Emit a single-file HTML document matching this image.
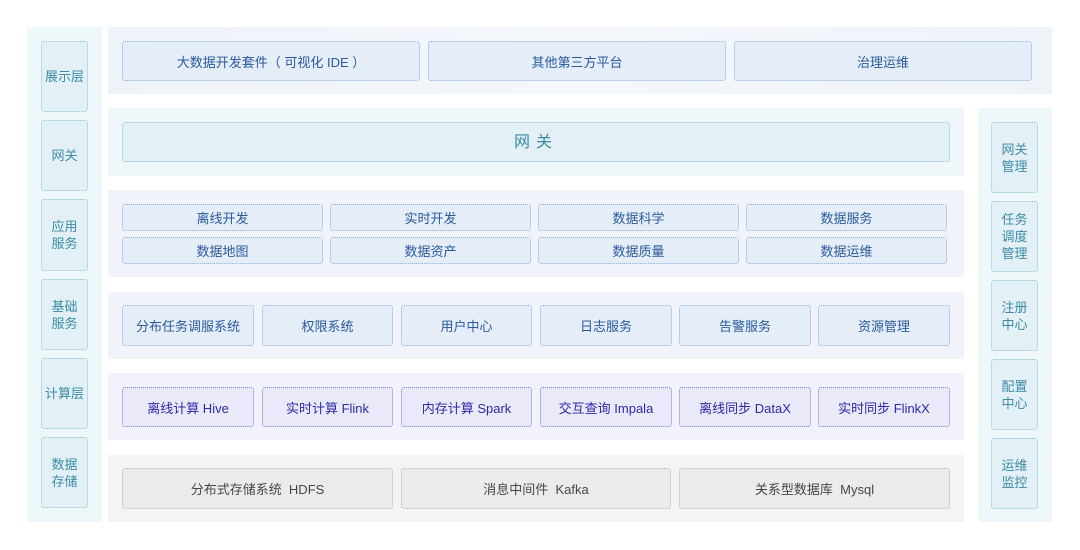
<!DOCTYPE html>
<html><head><meta charset="utf-8"><style>
*{margin:0;padding:0;box-sizing:border-box}
body{width:1080px;height:550px;background:#fff;position:relative;overflow:hidden;font-family:"Liberation Sans","Noto Sans CJK SC",sans-serif;font-size:13px}
.a{position:absolute}
.b{position:absolute;display:flex;align-items:center;justify-content:center;text-align:center;border:1px dotted #8fb0d8;border-radius:3px;background:#e5edf8;color:#2a5a9c}
.s{background:#e3f1f6;border-color:#8cc3d2;color:#3b8aa6;line-height:17px}
.p{background:#e9e9fa;border-color:#7b7bd6;color:#2b2ba8}
.g{background:#ebebeb;border-color:#b5b5b5;color:#474747}
</style></head><body>
<div class="a" style="left:27px;top:27px;width:75px;height:495px;background:#eef7fa"></div>
<div class="a" style="left:978px;top:108px;width:74px;height:414px;background:#eef7fa"></div>
<div class="a" style="left:108px;top:27px;width:944px;height:67px;background:linear-gradient(90deg,#eef3fa,#f4f8fc 50%,#eef3fa)"></div>
<div class="a" style="left:108px;top:108px;width:856px;height:68px;background:#f0f7fa"></div>
<div class="a" style="left:108px;top:190px;width:856px;height:87px;background:#f0f4fa"></div>
<div class="a" style="left:108px;top:292px;width:856px;height:67px;background:#f0f4fa"></div>
<div class="a" style="left:108px;top:373px;width:856px;height:67px;background:#f2f2fc"></div>
<div class="a" style="left:108px;top:455px;width:856px;height:67px;background:#f4f4f4"></div>

<div class="b s" style="left:41px;top:41px;width:47px;height:71px">展示层</div>
<div class="b s" style="left:41px;top:120px;width:47px;height:71px">网关</div>
<div class="b s" style="left:41px;top:199px;width:47px;height:72px">应用<br>服务</div>
<div class="b s" style="left:41px;top:279px;width:47px;height:71px">基础<br>服务</div>
<div class="b s" style="left:41px;top:358px;width:47px;height:71px">计算层</div>
<div class="b s" style="left:41px;top:437px;width:47px;height:71px">数据<br>存储</div>

<div class="b s" style="left:991px;top:122px;width:47px;height:71px">网关<br>管理</div>
<div class="b s" style="left:991px;top:201px;width:47px;height:71px">任务<br>调度<br>管理</div>
<div class="b s" style="left:991px;top:280px;width:47px;height:71px">注册<br>中心</div>
<div class="b s" style="left:991px;top:359px;width:47px;height:71px">配置<br>中心</div>
<div class="b s" style="left:991px;top:438px;width:47px;height:71px">运维<br>监控</div>

<div class="b" style="left:122px;top:41px;width:298px;height:40px">大数据开发套件（ 可视化 IDE ）</div>
<div class="b" style="left:428px;top:41px;width:298px;height:40px">其他第三方平台</div>
<div class="b" style="left:734px;top:41px;width:298px;height:40px">治理运维</div>

<div class="b s" style="left:122px;top:122px;width:828px;height:40px;font-size:16px;letter-spacing:6px">网关</div>

<div class="b" style="left:122px;top:204px;width:201px;height:27px">离线开发</div>
<div class="b" style="left:330px;top:204px;width:201px;height:27px">实时开发</div>
<div class="b" style="left:538px;top:204px;width:201px;height:27px">数据科学</div>
<div class="b" style="left:746px;top:204px;width:201px;height:27px">数据服务</div>
<div class="b" style="left:122px;top:237px;width:201px;height:27px">数据地图</div>
<div class="b" style="left:330px;top:237px;width:201px;height:27px">数据资产</div>
<div class="b" style="left:538px;top:237px;width:201px;height:27px">数据质量</div>
<div class="b" style="left:746px;top:237px;width:201px;height:27px">数据运维</div>

<div class="b" style="left:122px;top:305px;width:132px;height:41px">分布任务调服系统</div>
<div class="b" style="left:262px;top:305px;width:131px;height:41px">权限系统</div>
<div class="b" style="left:401px;top:305px;width:131px;height:41px">用户中心</div>
<div class="b" style="left:540px;top:305px;width:132px;height:41px">日志服务</div>
<div class="b" style="left:679px;top:305px;width:132px;height:41px">告警服务</div>
<div class="b" style="left:818px;top:305px;width:132px;height:41px">资源管理</div>

<div class="b p" style="left:122px;top:387px;width:132px;height:40px">离线计算 Hive</div>
<div class="b p" style="left:262px;top:387px;width:131px;height:40px">实时计算 Flink</div>
<div class="b p" style="left:401px;top:387px;width:131px;height:40px">内存计算 Spark</div>
<div class="b p" style="left:540px;top:387px;width:132px;height:40px">交互查询 Impala</div>
<div class="b p" style="left:679px;top:387px;width:132px;height:40px">离线同步 DataX</div>
<div class="b p" style="left:818px;top:387px;width:132px;height:40px">实时同步 FlinkX</div>

<div class="b g" style="left:122px;top:468px;width:271px;height:41px">分布式存储系统&nbsp;&nbsp;HDFS</div>
<div class="b g" style="left:401px;top:468px;width:270px;height:41px">消息中间件&nbsp;&nbsp;Kafka</div>
<div class="b g" style="left:679px;top:468px;width:271px;height:41px">关系型数据库&nbsp;&nbsp;Mysql</div>
</body></html>
